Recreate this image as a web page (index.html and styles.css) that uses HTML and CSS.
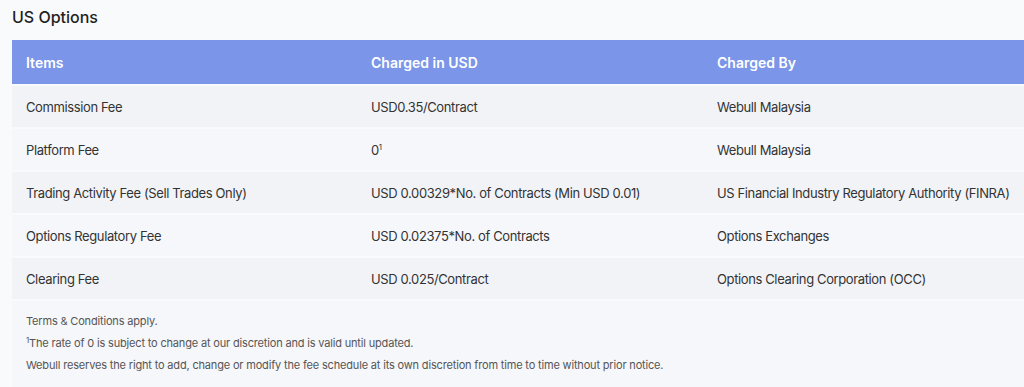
FILE: index.html
```html
<!DOCTYPE html>
<html lang="en">
<head>
<meta charset="utf-8">
<title>US Options</title>
<link rel="stylesheet" href="styles.css">
</head>
<body>
<div class="page">
  <h2 class="title">US Options</h2>
  <div class="fee-table">
    <div class="row head">
      <div class="cell">Items</div>
      <div class="cell">Charged in USD</div>
      <div class="cell">Charged By</div>
    </div>
    <div class="row odd">
      <div class="cell">Commission Fee</div>
      <div class="cell">USD0.35/Contract</div>
      <div class="cell">Webull Malaysia</div>
    </div>
    <div class="row even">
      <div class="cell">Platform Fee</div>
      <div class="cell">0<sup>1</sup></div>
      <div class="cell">Webull Malaysia</div>
    </div>
    <div class="row odd">
      <div class="cell">Trading Activity Fee (Sell Trades Only)</div>
      <div class="cell">USD 0.00329*No. of Contracts (Min USD 0.01)</div>
      <div class="cell">US Financial Industry Regulatory Authority (FINRA)</div>
    </div>
    <div class="row even">
      <div class="cell">Options Regulatory Fee</div>
      <div class="cell">USD 0.02375*No. of Contracts</div>
      <div class="cell">Options Exchanges</div>
    </div>
    <div class="row odd">
      <div class="cell">Clearing Fee</div>
      <div class="cell">USD 0.025/Contract</div>
      <div class="cell">Options Clearing Corporation (OCC)</div>
    </div>
    <div class="notes">
      <p>Terms &amp; Conditions apply.</p>
      <p><sup>1</sup>The rate of 0 is subject to change at our discretion and is valid until updated.</p>
      <p>Webull reserves the right to add, change or modify the fee schedule at its own discretion from time to time without prior notice.</p>
    </div>
  </div>
</div>
</body>
</html>
```
FILE: styles.css
```css
html, body {
  margin: 0;
  padding: 0;
  background: #f9fafc;
  overflow: hidden;
}
body {
  font-family: Inter, "Noto Sans", "Liberation Sans", sans-serif;
  color: #333;
}
.page {
  padding: 8px 0 0 12px;
  width: 1040px;
}
.title {
  margin: 0 0 13px 0;
  font-size: 16px;
  font-weight: 500;
  color: #1f1f1f;
  line-height: 19px;
}
.fee-table {
  display: flex;
  flex-direction: column;
  gap: 2px;
}
.row {
  display: grid;
  grid-template-columns: 345px 346px 349px;
  align-items: center;
  height: 41px;
  font-size: 13px;
  letter-spacing: -0.38px;
}
.row.head {
  background: #7b95e8;
  color: #fff;
  font-weight: 600;
  font-size: 14px;
  letter-spacing: 0;
  height: 44px;
}
.row.odd { background: #f2f3f7; }
.row.even { background: #f6f7fa; }
.cell {
  padding-left: 14px;
  white-space: nowrap;
}
sup {
  font-size: 8px;
  vertical-align: 5px;
  line-height: 0;
}
.notes {
  background: #f6f7fa;
  padding: 9px 14px 14px;
  font-size: 11px;
  letter-spacing: -0.17px;
  color: #555;
}
.notes p {
  margin: 0;
  line-height: 22px;
}
.notes sup {
  font-size: 8px;
  vertical-align: 4px;
}
```
